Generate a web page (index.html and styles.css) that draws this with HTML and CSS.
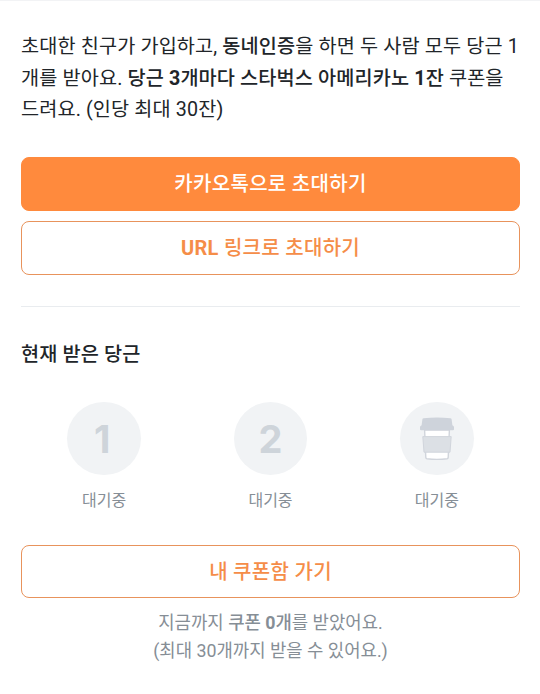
FILE: index.html
```html
<!DOCTYPE html>
<html lang="ko">
<head>
  <meta charset="UTF-8">
  <meta name="viewport" content="width=device-width, initial-scale=1.0">
  <title>친구 초대</title>
  <link rel="stylesheet" href="styles.css">
</head>
<body>

  <main class="container">
    <p class="intro">
      초대한 친구가 가입하고, <b>동네인증</b>을 하면 두 사람 모두 당근 1<br>개를 받아요. <b>당근 <span class="latin">3</span>개마다 스타벅스 아메리카노 <span class="latin">1</span>잔</b> 쿠폰을<br>드려요. (인당 최대 30잔)
    </p>

    <div class="buttons">
      <a href="#" class="btn btn-primary">카카오톡으로 초대하기</a>
      <a href="#" class="btn"><span><span class="latin">URL</span> 링크로 초대하기</span></a>
    </div>

    <section class="rewards">
      <h2>현재 받은 당근</h2>
      <ul class="steps">
        <li>
          <div class="circle circle-one">1</div>
          <span>대기중</span>
        </li>
        <li>
          <div class="circle">2</div>
          <span>대기중</span>
        </li>
        <li>
          <div class="circle">
            <svg class="cup" width="36" height="44" viewBox="0 0 36 44">
              <path d="M5.6 13h24.8l-1.2 27.6q0 1-1.1 1.2Q18 42.9 7.9 41.8q-1.1-.2-1.1-1.2z" fill="#fff" stroke="#d1d5dc" stroke-width="1.4"/>
              <path d="M3.8 19.6h28.4l-1.2 15.6H5z" fill="#dce0e5" stroke="#d1d5dc"/>
              <path d="M4.6 1.2Q18-.4 31.4 1.2q1 .1 1.2 1l.8 6 1 .8q.6.5.6 1.2v2q0 1-1 1h-32q-1 0-1-1v-2q0-.7.6-1.2l1-.8.8-6q.2-.9 1.2-1z" fill="#ced3db"/>
            </svg>
          </div>
          <span>대기중</span>
        </li>
      </ul>
      <a href="#" class="btn">내 쿠폰함 가기</a>
      <p class="summary">지금까지 <b>쿠폰 <span class="latin">0</span>개</b>를 받았어요.<br>(최대 30개까지 받을 수 있어요.)</p>
    </section>
  </main>

</body>
</html>
```
FILE: styles.css
```css
* {
  margin: 0;
  padding: 0;
  box-sizing: border-box;
}

body {
  font-family: Roboto, 'Noto Sans CJK KR', sans-serif;
  background: #fff;
  color: #212529;
  border-top: 1px solid #f2f3f5;
}

b {
  font-weight: 500;
}

.latin {
  font-weight: 700;
}

.container {
  padding: 30px 20px 0 21px;
}

.intro {
  font-size: 19.69px;
  line-height: 31.5px;
  letter-spacing: 0.12px;
  white-space: nowrap;
}

.buttons {
  display: flex;
  flex-direction: column;
  gap: 10.5px;
  margin-top: 31.5px;
  padding-bottom: 31.5px;
  border-bottom: 1px solid #e9ecef;
}

.btn {
  display: flex;
  align-items: center;
  justify-content: center;
  height: 53.5px;
  padding-bottom: 2px;
  border: 1px solid #e8935c;
  border-radius: 8px;
  color: #f58d48;
  font-size: 20px;
  font-weight: 500;
  letter-spacing: 0.3px;
  text-decoration: none;
}

.btn-primary {
  background: #ff8a3d;
  border-color: #ff8a3d;
  color: #fff;
}

.rewards {
  padding-top: 31.5px;
}

.rewards h2 {
  font-size: 19.69px;
  font-weight: 500;
  letter-spacing: 0.12px;
  line-height: 31.5px;
}

.steps {
  display: flex;
  list-style: none;
  margin: 31.5px 0 32px;
}

.steps li {
  flex: 1;
  display: flex;
  flex-direction: column;
  align-items: center;
  color: #868e96;
  font-size: 16px;
  line-height: 24px;
}

.circle {
  display: flex;
  align-items: center;
  justify-content: center;
  width: 73.5px;
  height: 73.5px;
  padding-top: 2px;
  margin-bottom: 13.5px;
  border-radius: 50%;
  background: #f1f3f5;
  color: #ced4da;
  font-family: Inter, sans-serif;
  font-size: 38px;
  font-weight: 700;
}

.circle-one {
  padding-right: 4px;
}

.summary {
  margin-top: 11px;
  color: #868e96;
  font-size: 17.8px;
  line-height: 27.5px;
  text-align: center;
}
```
